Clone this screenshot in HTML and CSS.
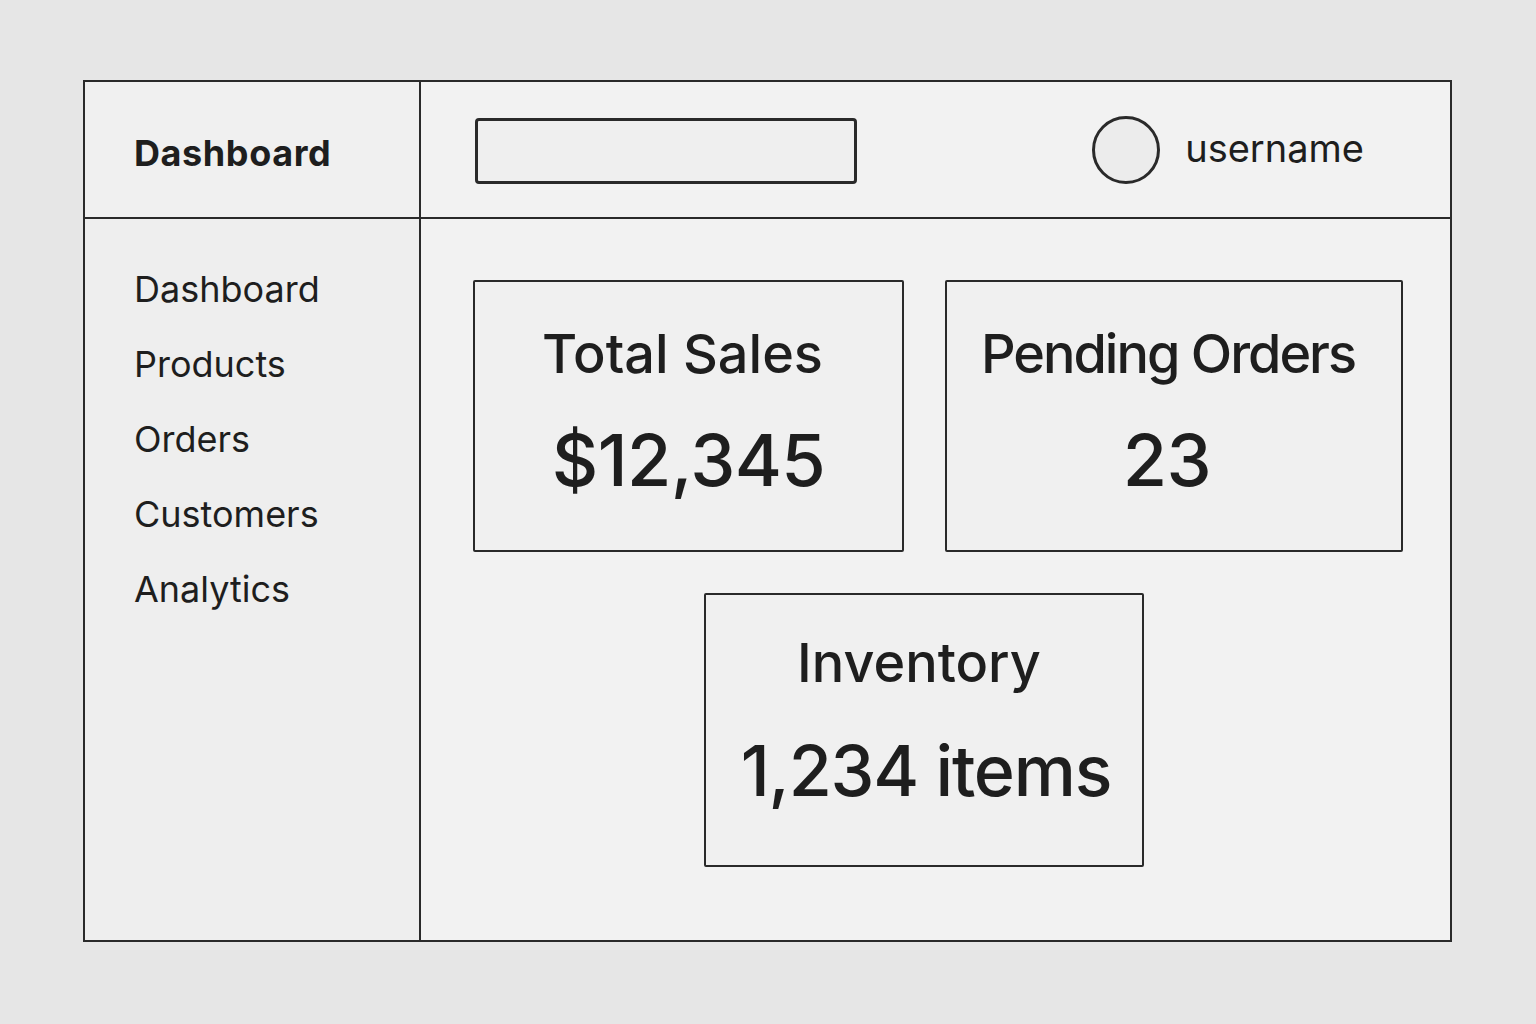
FILE: index.html
```html
<!DOCTYPE html>
<html lang="en">
<head>
<meta charset="utf-8">
<title>Dashboard</title>
<link rel="stylesheet" href="styles.css">
</head>
<body>
<div class="frame">
  <div class="brand">Dashboard</div>
  <header class="topbar">
    <div class="search"></div>
    <div class="user">
      <span class="avatar"></span>
      <span class="username">username</span>
    </div>
  </header>
  <nav class="sidebar">
    <a class="nav-item">Dashboard</a>
    <a class="nav-item">Products</a>
    <a class="nav-item">Orders</a>
    <a class="nav-item">Customers</a>
    <a class="nav-item">Analytics</a>
  </nav>
  <main class="content">
    <div class="row-top">
      <section class="card card-sales">
        <h2 class="card-title">Total Sales</h2>
        <div class="card-value">$12,345</div>
      </section>
      <section class="card card-orders">
        <h2 class="card-title">Pending Orders</h2>
        <div class="card-value">23</div>
      </section>
    </div>
    <section class="card card-inventory">
      <h2 class="card-title">Inventory</h2>
      <div class="card-value">1,234 items</div>
    </section>
  </main>
</div>
</body>
</html>
```
FILE: styles.css
```css
* { box-sizing: border-box; }
html, body { margin: 0; padding: 0; }
body {
  background: #e6e6e6;
  font-family: Inter, "Noto Sans", sans-serif;
  color: #1e1e1e;
  width: 1536px;
  height: 1024px;
  overflow: hidden;
}
.frame {
  margin: 80px 0 0 83px;
  width: 1369px;
  height: 862px;
  border: 2px solid #2a2a2a;
  background: #f0f0f0;
  display: grid;
  grid-template-columns: 336px 1fr;
  grid-template-rows: 137px 1fr;
}
.brand {
  border-right: 2px solid #2a2a2a;
  border-bottom: 2px solid #2a2a2a;
  display: flex;
  align-items: center;
  padding-left: 49px;
  padding-top: 6px;
  font-size: 36px;
  font-weight: 700;
  letter-spacing: 0.6px;
}
.topbar {
  border-bottom: 2px solid #2a2a2a;
  display: flex;
  align-items: center;
  justify-content: space-between;
  padding: 0 86px 0 54px;
  background: #f2f2f2;
}
.search {
  width: 382px;
  height: 66px;
  border: 3px solid #2a2a2a;
  border-radius: 4px;
  background: #efefef;
  margin-top: 2px;
}
.user {
  display: flex;
  align-items: center;
  gap: 25px;
}
.avatar {
  width: 68px;
  height: 68px;
  border: 3px solid #2a2a2a;
  border-radius: 50%;
  background: #ececec;
}
.username {
  font-size: 38px;
  margin-top: -4px;
}
.sidebar {
  border-right: 2px solid #2a2a2a;
  display: flex;
  flex-direction: column;
  padding: 48px 0 0 49px;
  gap: 31px;
  background: #eeeeee;
}
.nav-item {
  font-size: 36px;
  line-height: 44px;
  color: #1e1e1e;
}
.content {
  padding: 61px 0 0 52px;
  display: flex;
  flex-direction: column;
  gap: 41px;
  background: #f2f2f2;
}
.row-top {
  display: flex;
  gap: 41px;
}
.card {
  border: 2px solid #2a2a2a;
  border-radius: 2px;
  height: 272px;
  display: flex;
  flex-direction: column;
  align-items: center;
  background: #f0f0f0;
}
.card-sales { width: 431px; }
.card-orders { width: 458px; }
.card-inventory { width: 440px; height: 274px; margin-left: 231px; }
.card-title {
  margin: 40px 0 0;
  font-size: 54px;
  font-weight: 500;
  line-height: 64px;
}
.card-value {
  margin-top: 34px;
  font-size: 72px;
  font-weight: 500;
  line-height: 80px;
  letter-spacing: -0.6px;
}
.card-sales .card-title { margin-right: 12px; }
.card-orders .card-title { margin-right: 12px; letter-spacing: -2px; }
.card-orders .card-value { margin-right: 14px; }
.card-inventory .card-title { margin-top: 36px; margin-right: 10px; }
.card-inventory .card-value { font-size: 70px; letter-spacing: -1.2px; margin-top: 36px; margin-left: 4px; }
```
